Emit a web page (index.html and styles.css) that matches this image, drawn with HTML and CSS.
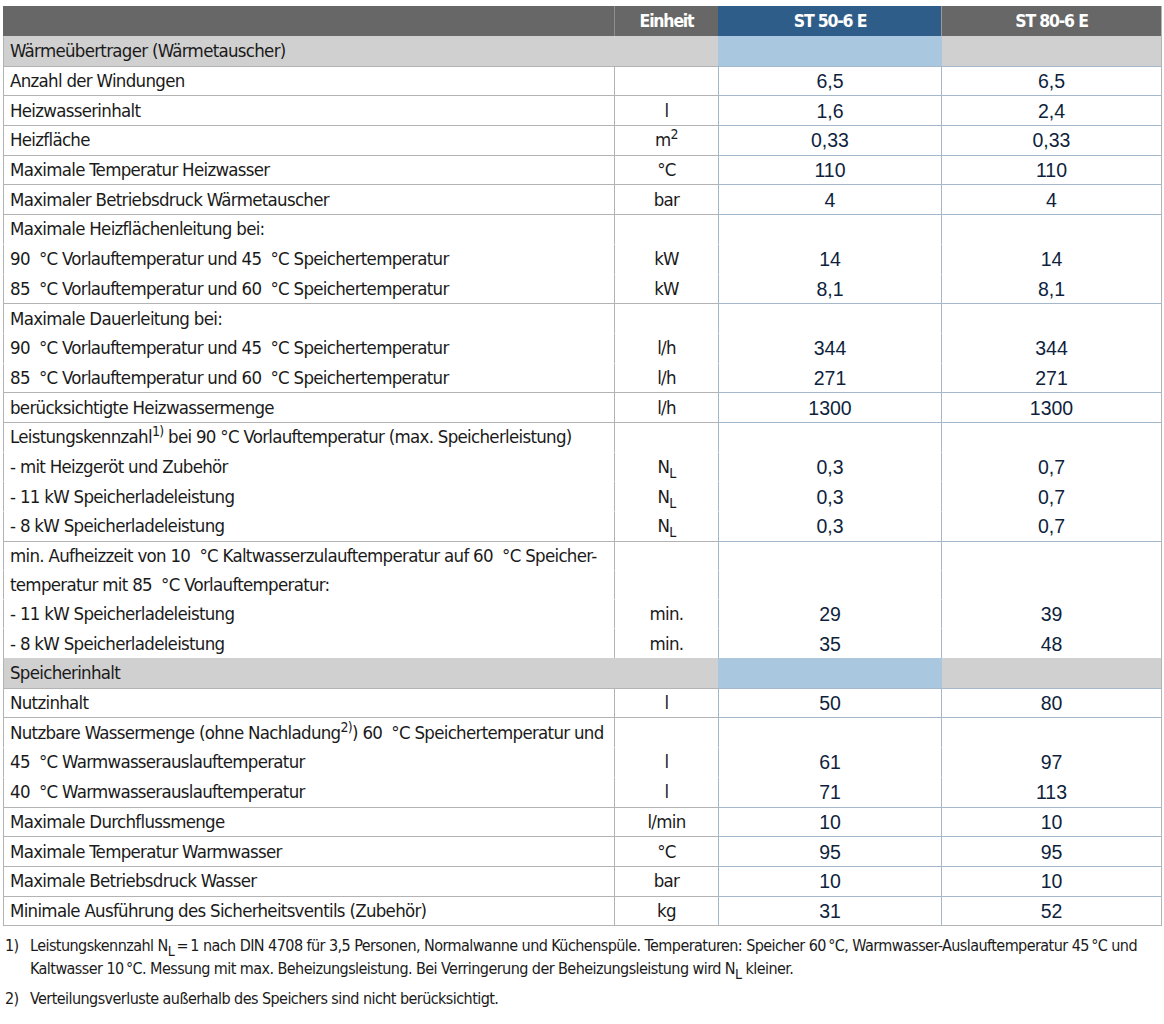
FILE: index.html
```html
<!DOCTYPE html>
<html lang="de">
<head>
    <meta charset="UTF-8">
    <title>Technische Daten ST 50-6 E / ST 80-6 E</title>
    <link rel="stylesheet" href="styles.css">
</head>
<body>
    <table class="daten">
        <colgroup>
            <col class="c-label">
            <col class="c-unit">
            <col class="c-st50">
            <col class="c-st80">
        </colgroup>
        <thead>
            <tr>
                <th class="label"></th>
                <th class="unit">Einheit</th>
                <th class="st50">ST 50-6 E</th>
                <th class="st80">ST 80-6 E</th>
            </tr>
        </thead>
        <tbody>
            <!-- Wärmeübertrager -->
            <tr class="section">
                <td colspan="2" class="label">Wärmeübertrager (Wärmetauscher)</td>
                <td class="st50"></td>
                <td class="st80"></td>
            </tr>
            <tr>
                <td class="label">Anzahl der Windungen</td>
                <td class="unit"></td>
                <td class="val st50">6,5</td>
                <td class="val st80">6,5</td>
            </tr>
            <tr>
                <td class="label">Heizwasserinhalt</td>
                <td class="unit">l</td>
                <td class="val st50">1,6</td>
                <td class="val st80">2,4</td>
            </tr>
            <tr>
                <td class="label">Heizfläche</td>
                <td class="unit">m<sup>2</sup></td>
                <td class="val st50">0,33</td>
                <td class="val st80">0,33</td>
            </tr>
            <tr>
                <td class="label">Maximale Temperatur Heizwasser</td>
                <td class="unit">°C</td>
                <td class="val st50">110</td>
                <td class="val st80">110</td>
            </tr>
            <tr>
                <td class="label">Maximaler Betriebsdruck Wärmetauscher</td>
                <td class="unit">bar</td>
                <td class="val st50">4</td>
                <td class="val st80">4</td>
            </tr>
            <tr>
                <td class="label">Maximale Heizflächenleitung bei:</td>
                <td class="unit"></td>
                <td class="val st50"></td>
                <td class="val st80"></td>
            </tr>
            <tr class="cont">
                <td class="label">90&nbsp; °C Vorlauftemperatur und 45&nbsp; °C Speichertemperatur</td>
                <td class="unit">kW</td>
                <td class="val st50">14</td>
                <td class="val st80">14</td>
            </tr>
            <tr class="cont">
                <td class="label">85&nbsp; °C Vorlauftemperatur und 60&nbsp; °C Speichertemperatur</td>
                <td class="unit">kW</td>
                <td class="val st50">8,1</td>
                <td class="val st80">8,1</td>
            </tr>
            <tr>
                <td class="label">Maximale Dauerleitung bei:</td>
                <td class="unit"></td>
                <td class="val st50"></td>
                <td class="val st80"></td>
            </tr>
            <tr class="cont">
                <td class="label">90&nbsp; °C Vorlauftemperatur und 45&nbsp; °C Speichertemperatur</td>
                <td class="unit">l/h</td>
                <td class="val st50">344</td>
                <td class="val st80">344</td>
            </tr>
            <tr class="cont">
                <td class="label">85&nbsp; °C Vorlauftemperatur und 60&nbsp; °C Speichertemperatur</td>
                <td class="unit">l/h</td>
                <td class="val st50">271</td>
                <td class="val st80">271</td>
            </tr>
            <tr>
                <td class="label">berücksichtigte Heizwassermenge</td>
                <td class="unit">l/h</td>
                <td class="val st50">1300</td>
                <td class="val st80">1300</td>
            </tr>
            <tr>
                <td class="label">Leistungskennzahl<sup>1)</sup> bei 90 °C Vorlauftemperatur (max. Speicherleistung)</td>
                <td class="unit"></td>
                <td class="val st50"></td>
                <td class="val st80"></td>
            </tr>
            <tr class="cont">
                <td class="label">- mit Heizgeröt und Zubehör</td>
                <td class="unit">N<sub>L</sub></td>
                <td class="val st50">0,3</td>
                <td class="val st80">0,7</td>
            </tr>
            <tr class="cont">
                <td class="label">- 11 kW Speicherladeleistung</td>
                <td class="unit">N<sub>L</sub></td>
                <td class="val st50">0,3</td>
                <td class="val st80">0,7</td>
            </tr>
            <tr class="cont">
                <td class="label">- 8 kW Speicherladeleistung</td>
                <td class="unit">N<sub>L</sub></td>
                <td class="val st50">0,3</td>
                <td class="val st80">0,7</td>
            </tr>
            <tr class="tight">
                <td class="label">min. Aufheizzeit von 10&nbsp; °C Kaltwasserzulauftemperatur auf 60&nbsp; °C Speicher-</td>
                <td class="unit"></td>
                <td class="val st50"></td>
                <td class="val st80"></td>
            </tr>
            <tr class="cont tight">
                <td class="label">temperatur mit 85&nbsp; °C Vorlauftemperatur:</td>
                <td class="unit"></td>
                <td class="val st50"></td>
                <td class="val st80"></td>
            </tr>
            <tr class="cont">
                <td class="label">- 11 kW Speicherladeleistung</td>
                <td class="unit">min.</td>
                <td class="val st50">29</td>
                <td class="val st80">39</td>
            </tr>
            <tr class="cont">
                <td class="label">- 8 kW Speicherladeleistung</td>
                <td class="unit">min.</td>
                <td class="val st50">35</td>
                <td class="val st80">48</td>
            </tr>

            <!-- Speicherinhalt -->
            <tr class="section">
                <td colspan="2" class="label">Speicherinhalt</td>
                <td class="st50"></td>
                <td class="st80"></td>
            </tr>
            <tr>
                <td class="label">Nutzinhalt</td>
                <td class="unit">l</td>
                <td class="val st50">50</td>
                <td class="val st80">80</td>
            </tr>
            <tr>
                <td class="label">Nutzbare Wassermenge (ohne Nachladung<sup>2)</sup>) 60&nbsp; °C Speichertemperatur und</td>
                <td class="unit"></td>
                <td class="val st50"></td>
                <td class="val st80"></td>
            </tr>
            <tr class="cont">
                <td class="label">45&nbsp; °C Warmwasserauslauftemperatur</td>
                <td class="unit">l</td>
                <td class="val st50">61</td>
                <td class="val st80">97</td>
            </tr>
            <tr class="cont">
                <td class="label">40&nbsp; °C Warmwasserauslauftemperatur</td>
                <td class="unit">l</td>
                <td class="val st50">71</td>
                <td class="val st80">113</td>
            </tr>
            <tr>
                <td class="label">Maximale Durchflussmenge</td>
                <td class="unit">l/min</td>
                <td class="val st50">10</td>
                <td class="val st80">10</td>
            </tr>
            <tr>
                <td class="label">Maximale Temperatur Warmwasser</td>
                <td class="unit">°C</td>
                <td class="val st50">95</td>
                <td class="val st80">95</td>
            </tr>
            <tr>
                <td class="label">Maximale Betriebsdruck Wasser</td>
                <td class="unit">bar</td>
                <td class="val st50">10</td>
                <td class="val st80">10</td>
            </tr>
            <tr class="last">
                <td class="label">Minimale Ausführung des Sicherheitsventils (Zubehör)</td>
                <td class="unit">kg</td>
                <td class="val st50">31</td>
                <td class="val st80">52</td>
            </tr>
        </tbody>
    </table>

    <!-- Fußnoten -->
    <div class="notes">
        <div class="note">
            <span class="nr">1)</span>
            <p>Leistungskennzahl N<sub>L</sub>&thinsp;=&thinsp;1 nach DIN 4708 für 3,5 Personen, Normalwanne und Küchenspüle. Temperaturen: Speicher 60&thinsp;°C, Warmwasser-Auslauftemperatur 45&thinsp;°C und<br>Kaltwasser 10&thinsp;°C. Messung mit max. Beheizungsleistung. Bei Verringerung der Beheizungsleistung wird N<sub>L</sub> kleiner.</p>
        </div>
        <div class="note">
            <span class="nr">2)</span>
            <p>Verteilungsverluste außerhalb des Speichers sind nicht berücksichtigt.</p>
        </div>
    </div>
</body>
</html>
```

FILE: styles.css
```css
* {
    margin: 0;
    padding: 0;
    box-sizing: border-box;
}

body {
    background-color: #fff;
    color: #1a1a1a;
    font-family: "DejaVu Sans Condensed", "Liberation Sans", sans-serif;
    font-size: 18.5px;
    letter-spacing: -0.7px;
    padding: 6px 3px 0 3px;
}

/* Tabelle */
.daten {
    width: 1158px;
    table-layout: fixed;
    border-collapse: separate;
    border-spacing: 0;
    border-right: 1px solid #b3b3b3;
    border-bottom: 1px solid #b3b3b3;
}

.c-label { width: 611px; }
.c-unit { width: 104px; }
.c-st50 { width: 223px; }
.c-st80 { width: 220px; }

.daten th,
.daten td {
    height: 29.7px;
    line-height: 28px;
    padding: 0;
    border-top: 1px solid #b3b3b3;
    border-left: 1px solid #b3b3b3;
    white-space: nowrap;
    vertical-align: middle;
}

.daten td.st50,
.daten td.st80 {
    border-top-color: #a3b8cc;
    border-left-color: #a3b8cc;
}

.daten tr.cont td {
    border-top-color: transparent !important;
}

.daten tr.tight td {
    height: 28.2px;
}

/* Kopfzeile */
.daten th {
    background-color: #676767;
    color: #fff;
    font-weight: bold;
    font-size: 17.5px;
    letter-spacing: -1.2px;
    text-align: center;
    border-top: none;
    border-left: 1px solid #8e8e8e;
    height: 30px;
}

.daten th.label {
    border-left: none;
}

.daten th.st50 {
    background-color: #2f5d8a;
    border-left-color: #2f5d8a;
}

.daten th.st80 {
    border-left-color: #9a9a9a;
}

/* Abschnittszeilen */
.daten tr.section td {
    background-color: #d0d0d0;
    border-top-color: #d0d0d0;
}

.daten tr.section td.st50 {
    background-color: #a9c8df;
    border-left-color: #a9c8df;
    border-top-color: #a9c8df;
}

.daten tr.section td.st80 {
    border-left-color: #a9c8df;
    border-top-color: #d0d0d0;
}

.label {
    padding-left: 6px !important;
    text-align: left;
}

.unit {
    text-align: center;
}

.val {
    text-align: center;
    font-family: "Liberation Sans", Arial, sans-serif;
    font-size: 19.5px;
    letter-spacing: 0;
    color: #0f1f3d;
}

sup {
    font-size: 14px;
    line-height: 0;
    vertical-align: 7px;
}

sub {
    font-size: 14px;
    line-height: 0;
    vertical-align: -5px;
}

/* Fußnoten */
.notes {
    margin-top: 8px;
    font-size: 16px;
    letter-spacing: -0.56px;
    line-height: 23px;
    color: #1a1a1a;
}

.note {
    display: flex;
    margin-bottom: 7px;
}

.note .nr {
    width: 27px;
    padding-left: 2px;
    flex-shrink: 0;
}

.note p {
    white-space: nowrap;
}
```
